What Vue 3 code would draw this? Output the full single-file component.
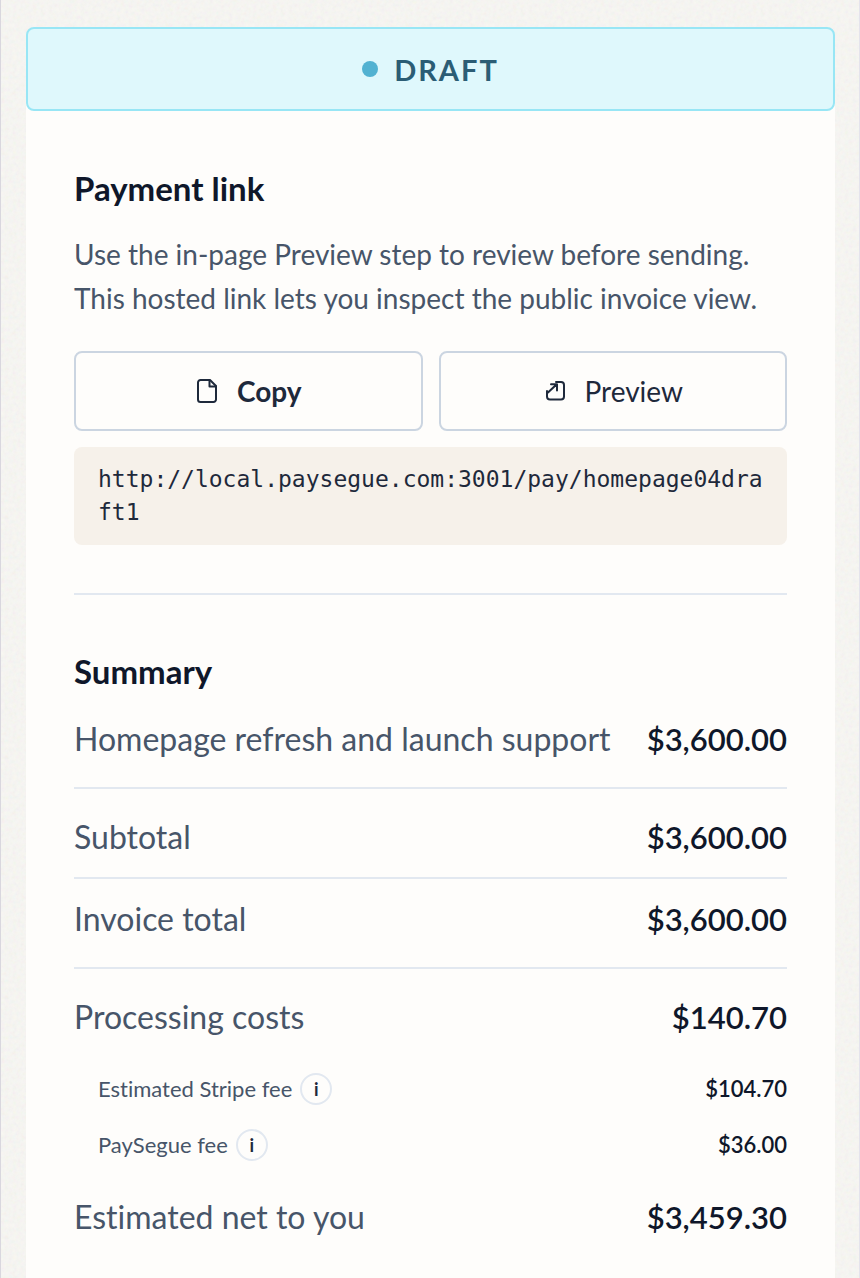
<script setup>
import { ref, computed } from 'vue';

const link = ref('http://local.paysegue.com:3001/pay/homepage04draft1');
const items = ref([{ name: 'Homepage refresh and launch support', amount: 3600 }]);
const fees = ref([
  { name: 'Estimated Stripe fee', amount: 104.7 },
  { name: 'PaySegue fee', amount: 36 },
]);

const sum = (list) => list.reduce((total, entry) => total + entry.amount, 0);

const subtotal = computed(() => sum(items.value));
const processing = computed(() => sum(fees.value));
const net = computed(() => subtotal.value - processing.value);

const money = (value) =>
  value.toLocaleString('en-US', { style: 'currency', currency: 'USD' });

const copyLink = () => {
  navigator.clipboard?.writeText(link.value);
};
</script>

<template>
  <main class="page">
    <div class="status">
      <span class="dot"></span>
      <span>DRAFT</span>
    </div>

    <div class="card">
      <section class="payment">
        <h2>Payment link</h2>
        <p class="hint">
          Use the in-page Preview step to review before sending. This hosted
          link lets you inspect the public invoice view.
        </p>

        <div class="actions">
          <button type="button" class="action strong" @click="copyLink">
            <svg class="icon" viewBox="0 0 24 28" aria-hidden="true">
              <path d="M5.500 3H15l6 6v13.500a2.500 2.500 0 0 1-2.500 2.500h-13A2.500 2.500 0 0 1 3 22.500V5.500A2.500 2.500 0 0 1 5.500 3z" />
              <path d="M14.500 3.500v6H21" />
            </svg>
            Copy
          </button>
          <a class="action" :href="link">
            <svg class="icon" viewBox="0 0 24 28" aria-hidden="true">
              <path d="M13 5h5a3 3 0 0 1 3 3v11.500a3 3 0 0 1-3 3H7a3 3 0 0 1-3-3V14" />
              <path d="M5 15.500L13.500 7.500M8 7.200h6v6.300" />
            </svg>
            Preview
          </a>
        </div>

        <code class="url">{{ link }}</code>
      </section>

      <section class="summary">
        <h2>Summary</h2>

        <dl>
          <div v-for="item in items" :key="item.name" class="row item">
            <dt>{{ item.name }}</dt>
            <dd>{{ money(item.amount) }}</dd>
          </div>
          <div class="row subtotal">
            <dt>Subtotal</dt>
            <dd>{{ money(subtotal) }}</dd>
          </div>
          <div class="row total">
            <dt>Invoice total</dt>
            <dd>{{ money(subtotal) }}</dd>
          </div>
          <div class="row processing">
            <dt>Processing costs</dt>
            <dd>{{ money(processing) }}</dd>
          </div>
          <div v-for="fee in fees" :key="fee.name" class="row fee">
            <dt>
              {{ fee.name }}
              <button type="button" class="info" :aria-label="'About ' + fee.name">i</button>
            </dt>
            <dd>{{ money(fee.amount) }}</dd>
          </div>
          <div class="row net">
            <dt>Estimated net to you</dt>
            <dd>{{ money(net) }}</dd>
          </div>
        </dl>
      </section>
    </div>
  </main>
</template>

<style>
body {
  background: #f6f5f1;
}
</style>

<style scoped>
.page {
  box-sizing: border-box;
  min-height: 100vh;
  display: flex;
  flex-direction: column;
  padding: 27px 24px 0 25px;
  border-left: 1px solid #d9d7de;
  border-right: 1px solid #e4e3ec;
  background-color: #f8f7f3;
  /* paper grain */
  background-image: url("data:image/svg+xml,%3Csvg xmlns='http://www.w3.org/2000/svg' width='240' height='240'%3E%3Cfilter id='n'%3E%3CfeTurbulence type='fractalNoise' baseFrequency='0.25' numOctaves='3' stitchTiles='stitch'/%3E%3C/filter%3E%3Crect width='240' height='240' filter='url(%23n)' opacity='0.1'/%3E%3C/svg%3E");
  font-family: Lato, "Liberation Sans", sans-serif;
  font-variant-ligatures: none;
  color: #0f172a;
}

.status {
  position: relative;
  display: flex;
  align-items: center;
  justify-content: center;
  gap: 16px;
  box-sizing: border-box;
  height: 84px;
  border: 2px solid #98e6f5;
  border-radius: 8px;
  background: #dff8fc;
  color: #2b5d75;
  font-size: 29px;
  font-weight: 700;
  letter-spacing: 2px;
}

.dot {
  width: 16px;
  height: 16px;
  border-radius: 50%;
  background: #52b2d1;
}

.card {
  flex: 1;
  margin-top: -8px;
  padding: 8px 48px 32px;
  background: #fefdfb;
}

h2 {
  margin: 0;
  font-size: 33px;
  line-height: 40px;
  font-weight: 700;
}

.payment {
  padding: 57px 0 48px;
  border-bottom: 2px solid #e2e8f0;
}

.hint {
  margin: 24px 0 31px;
  font-size: 28px;
  line-height: 44px;
  color: #475569;
}

.actions {
  display: grid;
  grid-template-columns: 1fr 1fr;
  gap: 16px;
}

.action {
  display: flex;
  align-items: center;
  justify-content: center;
  gap: 18px;
  box-sizing: border-box;
  height: 80px;
  border: 2px solid #cbd5e1;
  border-radius: 8px;
  background: transparent;
  color: #1e293b;
  font-family: inherit;
  font-size: 28px;
  font-weight: 400;
  text-decoration: none;
  cursor: pointer;
}

.action.strong {
  font-weight: 700;
}

.icon {
  width: 24px;
  height: 28px;
  fill: none;
  stroke: currentColor;
  stroke-width: 2;
  stroke-linecap: round;
  stroke-linejoin: round;
}

.url {
  display: block;
  margin-top: 16px;
  padding: 16px 24px;
  border-radius: 8px;
  background: #f6f1ea;
  color: #1e293b;
  font-family: "DejaVu Sans Mono", monospace;
  font-size: 23px;
  line-height: 33px;
  word-break: break-all;
}

.summary {
  padding-top: 56px;
}

dl {
  margin: 24px 0 0;
}

.row {
  display: flex;
  align-items: center;
  justify-content: space-between;
  gap: 24px;
  font-size: 32px;
  line-height: 48px;
}

dt {
  color: #475569;
}

dd {
  margin: 0;
  font-size: 31px;
  font-weight: 600;
}

.item {
  padding-bottom: 24px;
  border-bottom: 2px solid #e2e8f0;
}

.subtotal {
  padding: 24px 0 16px;
  border-bottom: 2px solid #e2e8f0;
}

.total {
  padding: 16px 0 24px;
  border-bottom: 2px solid #e2e8f0;
}

.processing {
  padding-top: 24px;
}

.fee {
  margin-top: 24px;
  padding-left: 24px;
  font-size: 22px;
  line-height: 32px;
}

.fee dd {
  font-size: 22px;
}

.processing + .fee {
  margin-top: 32px;
}

.fee dt {
  display: flex;
  align-items: center;
  gap: 8px;
}

.info {
  box-sizing: border-box;
  width: 32px;
  height: 32px;
  padding: 0;
  border: 2px solid #e2e8f0;
  border-radius: 50%;
  background: transparent;
  color: #1e293b;
  font-family: inherit;
  font-size: 18px;
  font-weight: 700;
  line-height: 28px;
  cursor: pointer;
}

.net {
  margin-top: 32px;
}
</style>
